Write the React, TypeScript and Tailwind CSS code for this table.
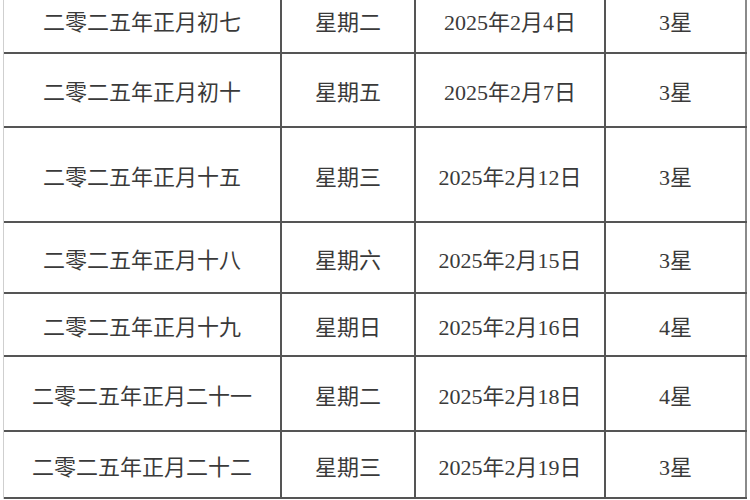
const rows = [
  { lunar: "二零二五年正月初七", week: "星期二", date: "2025年2月4日", star: "3星", h: "h-[67px]" },
  { lunar: "二零二五年正月初十", week: "星期五", date: "2025年2月7日", star: "3星", h: "h-[74px]" },
  { lunar: "二零二五年正月十五", week: "星期三", date: "2025年2月12日", star: "3星", h: "h-[95px]" },
  { lunar: "二零二五年正月十八", week: "星期六", date: "2025年2月15日", star: "3星", h: "h-[71px]" },
  { lunar: "二零二五年正月十九", week: "星期日", date: "2025年2月16日", star: "4星", h: "h-[63px]" },
  { lunar: "二零二五年正月二十一", week: "星期二", date: "2025年2月18日", star: "4星", h: "h-[75px]" },
  { lunar: "二零二五年正月二十二", week: "星期三", date: "2025年2月19日", star: "3星", h: "h-[67px]" },
]

export default function App() {
  return (
    <div className="w-[750px] h-[500px] overflow-hidden bg-white">
      <div
        className="ml-[3px] -mt-[13px] w-[744px] border-l border-[#cfcfcf] text-[22px] text-[#3a3a3a]"
        style={{ fontFamily: '"Liberation Serif", "Noto Sans CJK SC", serif' }}
      >
        {rows.map((r) => (
          <div
            key={r.date}
            className={`grid grid-cols-[278px_134px_190px_141px] border-b-2 border-[#555] ${r.h}`}
          >
            <div className="flex items-center justify-center pt-[5px] border-r-2 border-[#555]">{r.lunar}</div>
            <div className="flex items-center justify-center pt-[5px] border-r-2 border-[#555]">{r.week}</div>
            <div className="flex items-center justify-center pt-[5px] border-r-2 border-[#555]">{r.date}</div>
            <div className="flex items-center justify-center pt-[5px] border-r-2 border-[#8a8a8a]">{r.star}</div>
          </div>
        ))}
      </div>
    </div>
  )
}
